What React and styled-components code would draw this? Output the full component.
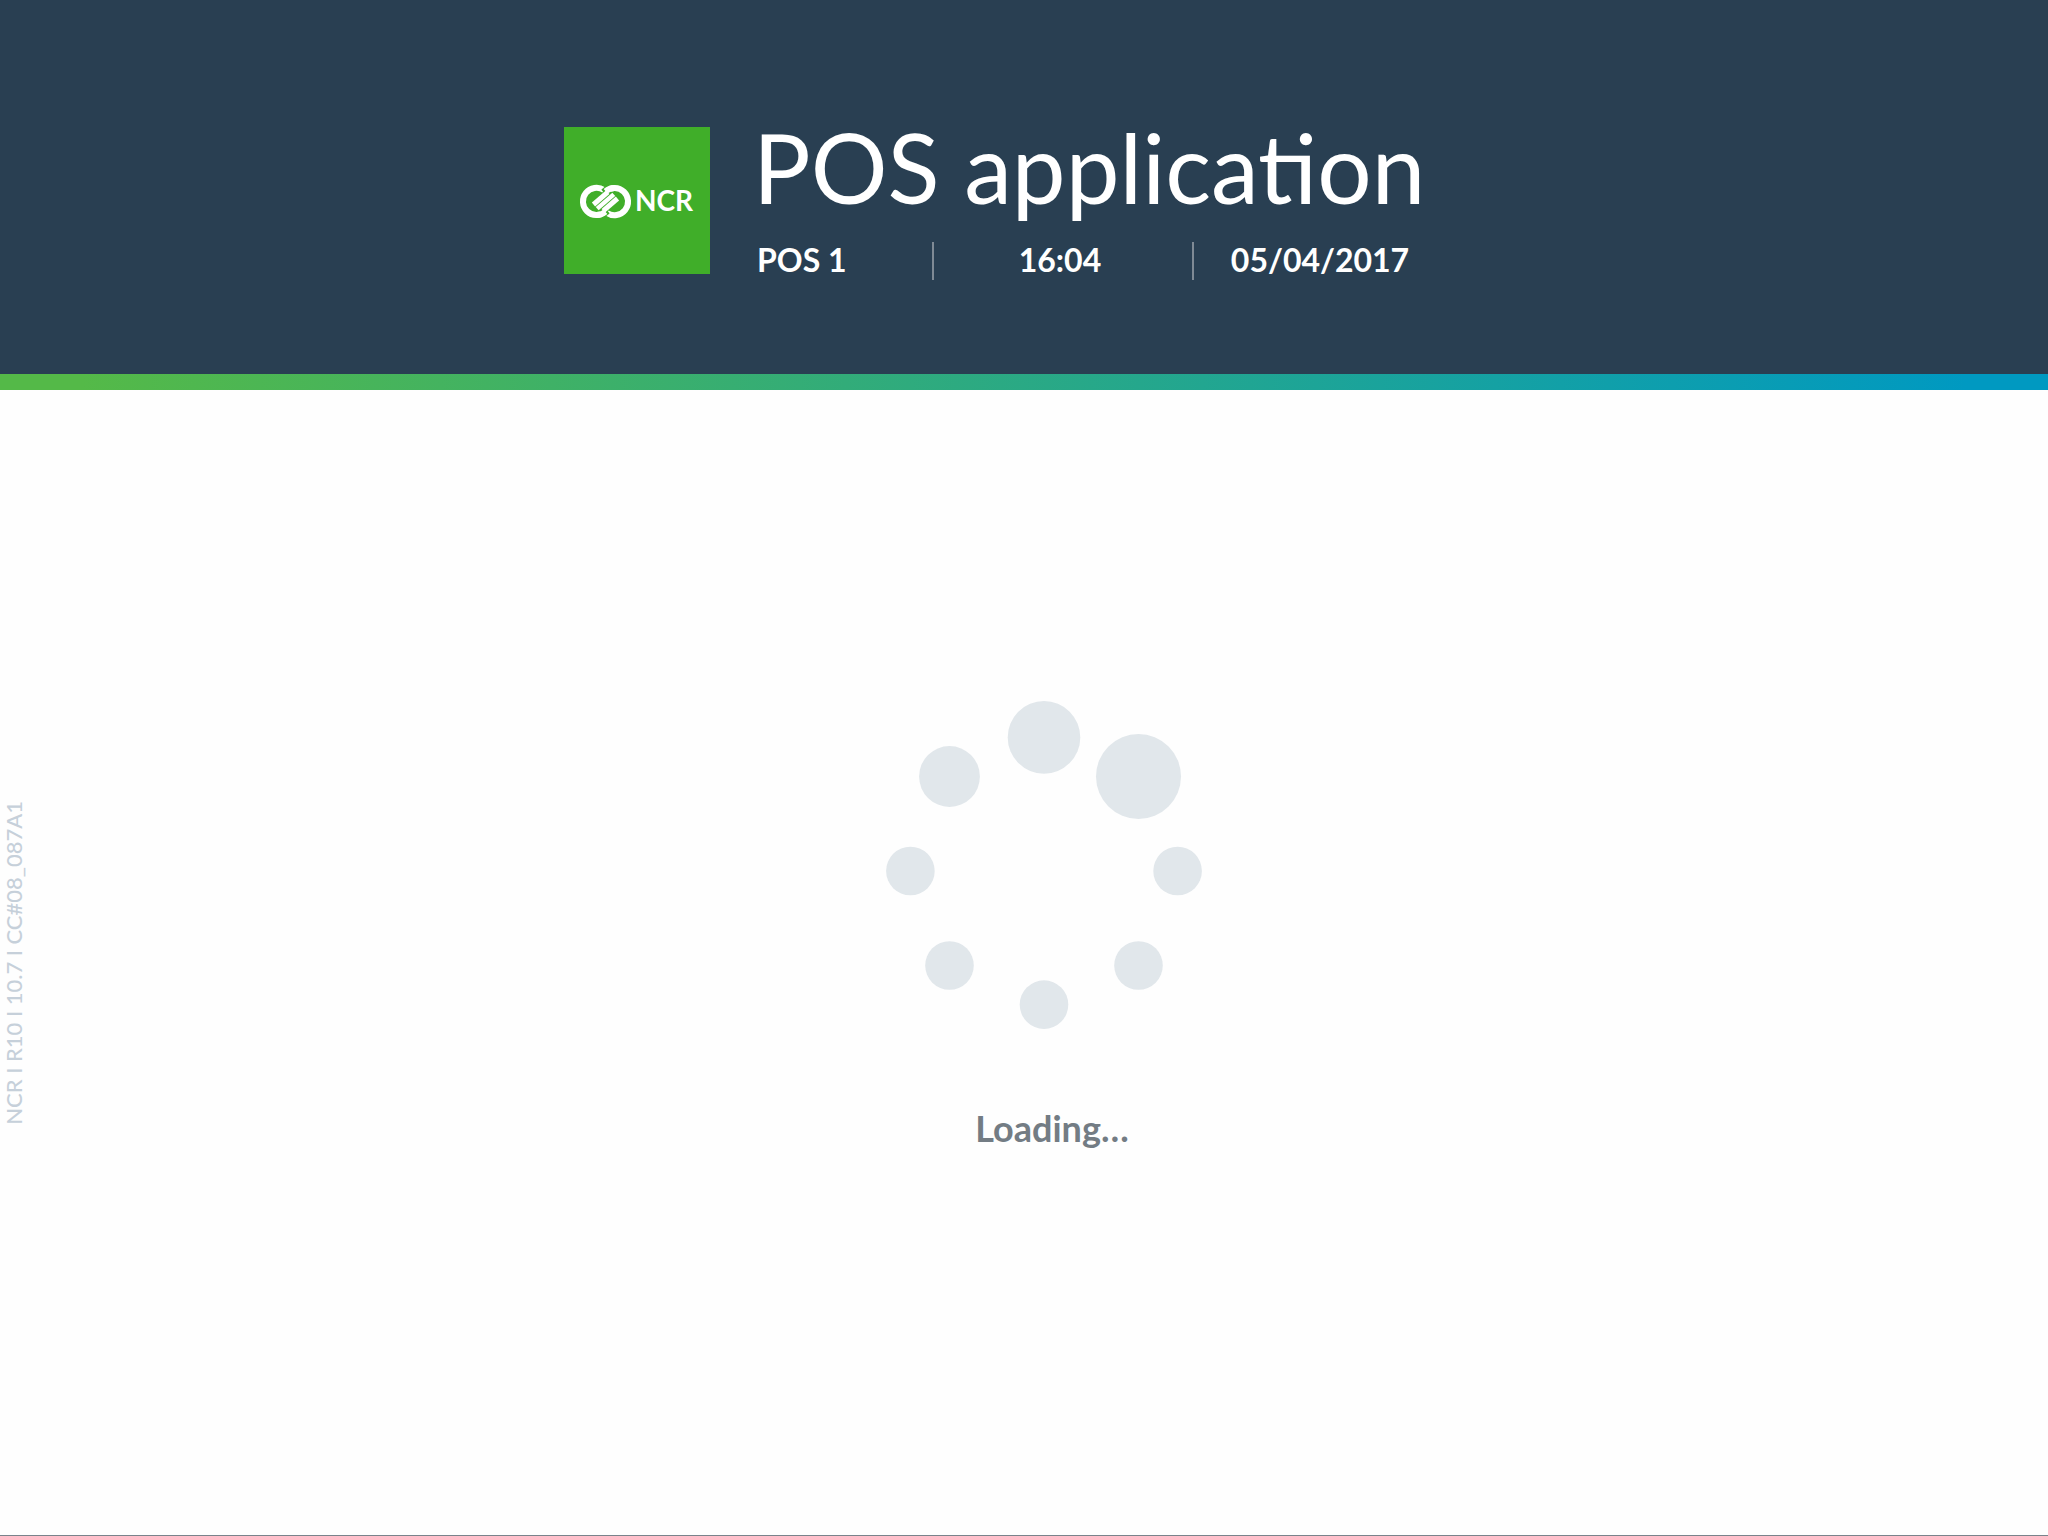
import React from "react";
import styled, { createGlobalStyle } from "styled-components";

const GlobalStyle = createGlobalStyle`
  * { box-sizing: border-box; }
  body {
    margin: 0;
    background: #fefefe;
    font-family: Lato, sans-serif;
  }
`;

const Page = styled.div`
  min-height: 100vh;
  display: flex;
  flex-direction: column;
  border-bottom: 1px solid #79838b;
`;

const Header = styled.header`
  display: flex;
  justify-content: center;
  padding: 127px 24px 100px;
  background: #293f52;
  color: #fff;
`;

const Stripe = styled.div`
  height: 16px;
  background: linear-gradient(90deg, #54b948 0%, #54b948 4%, #0099c1 96%, #0099c1 100%);
`;

const Brand = styled.div`
  display: flex;
  gap: 47px;
  width: 920px;
`;

const LogoTile = styled.div`
  display: flex;
  flex: none;
  align-items: center;
  justify-content: center;
  width: 146px;
  height: 147px;
  background: #40ae29;
`;

const LogoArt = styled.svg`
  display: block;
  width: 118px;
  height: 36px;
`;

const LogoText = styled.text`
  font: 700 28px Lato, sans-serif;
  fill: #fff;
`;

const Details = styled.div`
  display: flex;
  flex-direction: column;
  justify-content: space-between;
`;

const Title = styled.h1`
  margin: -3px 0 0 -4px;
  font-size: 96px;
  font-weight: 400;
  line-height: 86px;
  white-space: nowrap;
`;

const InfoRow = styled.div`
  display: grid;
  grid-template-columns: 175px 260px 260px;
  margin-bottom: -6px;
`;

const Info = styled.span`
  height: 38px;
  padding-right: 6px;
  border-left: ${(p) => (p.$divided ? "2px solid #7f8a95" : "0")};
  font-size: 32px;
  font-weight: 700;
  line-height: 36px;
  text-align: ${(p) => p.$align || "center"};
  white-space: nowrap;
`;

const Main = styled.main`
  display: flex;
  flex: 1;
  align-items: center;
  gap: 12px;
`;

const Version = styled.small`
  width: 28px;
  color: #c6d0da;
  font-size: 22px;
  font-weight: 500;
  line-height: 28px;
  writing-mode: vertical-rl;
  transform: rotate(180deg);
  text-align: center;
  white-space: nowrap;
`;

const Loader = styled.section`
  display: flex;
  flex: 1;
  flex-direction: column;
  align-items: center;
  gap: 60px;
  padding-bottom: 80px;
`;

const Spinner = styled.svg`
  width: 350px;
  height: 350px;
  fill: #e1e7eb;
`;

const LoadingText = styled.p`
  margin: 0;
  padding-left: 16px;
  color: #737c84;
  font-size: 36px;
  font-weight: 700;
  line-height: 44px;
`;

const DOTS = [
  [175, 41.4, 36.3],
  [269.5, 80.5, 42.5],
  [308.6, 175, 24.3],
  [269.5, 269.5, 24.3],
  [175, 308.6, 24.3],
  [80.5, 269.5, 24.3],
  [41.4, 175, 24.3],
  [80.5, 80.5, 30.4],
];

function Logo() {
  return (
    <LogoTile>
      <LogoArt viewBox="0 0 118 36" role="img" aria-label="NCR">
        <g transform="translate(1.5 2)" fill="none" stroke="#fff" strokeWidth="6">
          <path d="M24.5 5.1 A13.6 13.6 0 1 0 25.9 26.8" />
          <path d="M27.5 27.9 A13.6 13.6 0 1 0 26.1 6.2" />
          <g stroke="#40ae29" strokeWidth="8">
            <path d="M24.6 7.6 L26.1 6.2 A13.6 13.6 0 0 1 30 3.8" />
            <path d="M27.4 25.4 L25.9 26.8 A13.6 13.6 0 0 1 22 29.2" />
          </g>
          <path d="M26.1 6.2 A13.6 13.6 0 0 1 35 2.9" />
          <path d="M25.9 26.8 A13.6 13.6 0 0 1 17 30.1" />
          <path d="M14 19.5 L28.3 7.1" strokeWidth="5" />
          <path d="M38 13.5 L23.7 25.9" strokeWidth="5" />
          <path d="M17.7 23.7 L34.3 9.3" strokeWidth="4.4" />
        </g>
        <LogoText x="57" y="28">NCR</LogoText>
      </LogoArt>
    </LogoTile>
  );
}

export default function App() {
  return (
    <>
      <GlobalStyle />
      <Page>
        <Header>
          <Brand>
            <Logo />
            <Details>
              <Title>POS application</Title>
              <InfoRow>
                <Info $align="left">POS 1</Info>
                <Info $divided>16:04</Info>
                <Info $divided>05/04/2017</Info>
              </InfoRow>
            </Details>
          </Brand>
        </Header>
        <Stripe />
        <Main>
          <Version>NCR I R10 I 10.7 I CC#08_087A1</Version>
          <Loader role="status">
            <Spinner viewBox="0 0 350 350" aria-hidden="true">
              {DOTS.map(([x, y, r], i) => (
                <circle key={i} cx={x} cy={y} r={r} />
              ))}
            </Spinner>
            <LoadingText>Loading…</LoadingText>
          </Loader>
        </Main>
      </Page>
    </>
  );
}
